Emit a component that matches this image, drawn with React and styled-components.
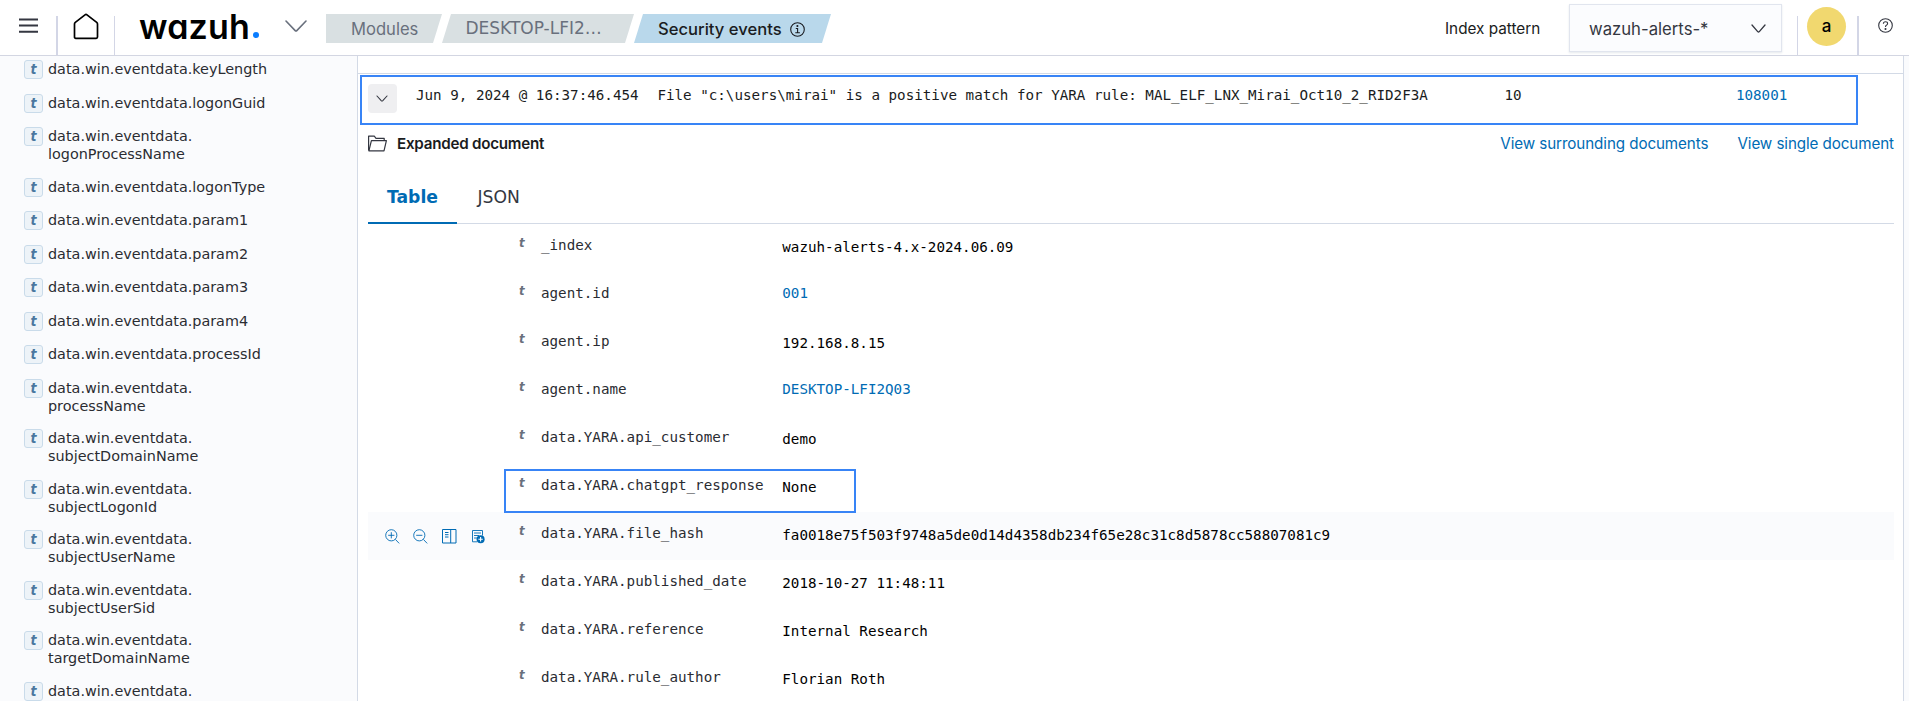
import React from "react";
import styled, { createGlobalStyle, css } from "styled-components";

const GlobalStyle = createGlobalStyle`
  *, *::before, *::after { box-sizing: border-box; }
  html, body { margin: 0; padding: 0; }
  body {
    background: #fafbfd;
    color: #1a1c21;
    font-family: Inter, "Liberation Sans", sans-serif;
    overflow: hidden;
  }
`;

const mono = css`
  font-family: "DejaVu Sans Mono", "Liberation Mono", monospace;
  font-size: 14.22px;
  line-height: 20px;
  white-space: pre;
`;

const Shell = styled.div`
  width: 100%;
  height: 701px;
  display: flex;
  flex-direction: column;
  overflow: hidden;
`;

const Header = styled.header`
  flex: none;
  height: 56px;
  display: flex;
  background: #fff;
  border-bottom: 1px solid #d3d6e2;
`;

const HeaderCell = styled.div`
  flex: none;
  width: ${(p) => p.$w}px;
  padding-top: ${(p) => p.$top || 0}px;
  padding-left: ${(p) => p.$left || 0}px;
  svg { display: block; }
`;

const Separator = styled.div`
  flex: none;
  width: ${(p) => p.$w}px;
  margin-top: 16px;
  background: #d3d6e6;
`;

const Logo = styled.div`
  flex: none;
  width: 146px;
  padding-top: 7px;
  display: flex;
  align-items: flex-start;
  color: #000;
  font-size: 34px;
  line-height: 40px;
  font-weight: 600;
  letter-spacing: 0.15px;
  font-feature-settings: "cv11" 1;
  b {
    width: 6px;
    height: 6px;
    border-radius: 50%;
    background: #0a7dff;
    margin: 25px 0 0 3px;
  }
`;

const Crumbs = styled.nav`
  flex: none;
  display: flex;
  padding-top: 14px;
  height: 43px;
`;

const Crumb = styled.span`
  flex: none;
  display: flex;
  width: ${(p) => p.$w}px;
  margin-right: 1px;
  padding-left: ${(p) => p.$left}px;
  background: ${(p) => (p.$active ? "#b9d8eb" : "#d9e0e2")};
  color: ${(p) => (p.$active ? "#1a1c21" : "#69707d")};
  font-size: ${(p) => p.$size || 16.6}px;
  font-weight: ${(p) => (p.$active ? 500 : 400)};
  font-family: ${(p) => (p.$dejavu ? '"DejaVu Sans"' : "Inter")}, sans-serif;
  line-height: ${(p) => p.$lh || 31}px;
  white-space: nowrap;
  clip-path: ${(p) =>
    p.$first
      ? "polygon(0 0, 100% 0, calc(100% - 9px) 100%, 0 100%)"
      : "polygon(9px 0, 100% 0, calc(100% - 9px) 100%, 0 100%)"};
  & + & { margin-left: -1px; }
  svg { margin: 8px 0 0 8px; }
`;

const Spacer = styled.div`
  flex: 1;
`;

const PatternLabel = styled.div`
  flex: none;
  width: 124px;
  padding-top: 18px;
  font-size: 15.3px;
  line-height: 22px;
`;

const Select = styled.div`
  flex: none;
  width: 213px;
  height: 48px;
  margin-top: 4px;
  padding: 1px 15px 0 19px;
  display: flex;
  align-items: center;
  justify-content: space-between;
  background: #fbfcfe;
  border: 1px solid #e1e5ee;
  box-shadow: 0 1px 2px rgba(152, 162, 179, 0.25);
  color: #343741;
  font-size: 16.7px;
`;

const Avatar = styled.div`
  width: 39px;
  height: 39px;
  border-radius: 50%;
  background: #f1d86f;
  color: #000;
  font-size: 17px;
  font-weight: 500;
  line-height: 38px;
  text-align: center;
`;

const Body = styled.div`
  flex: 1;
  display: flex;
  min-height: 0;
`;

const Sidebar = styled.aside`
  flex: none;
  width: 358px;
  padding: 4px 0 0 24px;
  border-right: 1px solid #d3dae6;
  overflow: hidden;
`;

const Field = styled.div`
  display: flex;
  padding-bottom: 14.5px;
`;

const Token = styled.span`
  flex: none;
  width: 19px;
  height: 19px;
  border: 1px solid #c9dbea;
  border-radius: 3px;
  background: #edf3f8;
  color: #4a779f;
  font: italic bold 14px/16px "DejaVu Sans Condensed", "DejaVu Sans", sans-serif;
  text-align: center;
`;

const FieldName = styled.span`
  padding-left: 5px;
  font-family: "DejaVu Sans", sans-serif;
  font-size: 14.38px;
  line-height: 18px;
  color: #2a2c32;
  white-space: pre;
`;

const Main = styled.main`
  flex: none;
  width: 1546px;
  padding-top: 17px;
  background: #fff;
  border-right: 1px solid #d3dae6;
`;

const EventRow = styled.div`
  border-top: 1px solid #d3dae6;
  padding: 1px 0 0 2px;
`;

const EventOutline = styled.div`
  ${mono}
  width: 1498px;
  height: 50px;
  border: 2px solid #3884f6;
  display: flex;
  padding: 7px 0 0 6px;
`;

const EventCell = styled.span`
  flex: none;
  width: ${(p) => p.$w}px;
  padding-top: 1px;
  color: ${(p) => (p.$link ? "#006bb4" : "#1a1c21")};
`;

const Toggle = styled.button`
  flex: none;
  width: 29px;
  height: 29px;
  margin-right: 19px;
  padding: 0 1px 1px 0;
  border: 0;
  border-radius: 4px;
  background: #efeff1;
  display: flex;
  align-items: center;
  justify-content: center;
`;

const DocHead = styled.div`
  display: flex;
  height: 36px;
  margin-bottom: 2px;
  padding: 0 9px 0 10px;
  align-items: center;
  svg { margin: 1px 10px 0 0; }
  b {
    flex: 1;
    font-size: 15.2px;
    font-weight: 600;
    letter-spacing: -0.25px;
  }
`;

const DocLink = styled.a`
  color: #006bb4;
  font-size: 15.2px;
  letter-spacing: -0.09px;
  margin-left: 29px;
`;

const Tabs = styled.div`
  display: flex;
  height: 61px;
  margin: 0 9px 0 10px;
  box-shadow: inset 0 -1px 0 #d3dae6;
  font-family: "DejaVu Sans", sans-serif;
  font-size: 17.2px;
  line-height: 68px;
`;

const Tab = styled.div`
  padding: 0 19.5px 0 19px;
  height: 61px;
  color: ${(p) => (p.$active ? "#006bb4" : "#343741")};
  font-weight: ${(p) => (p.$active ? 700 : 400)};
  border-bottom: ${(p) => (p.$active ? "2px solid #006bb4" : "0")};
  & + & { padding-left: 20px; }
`;

const Row = styled.div`
  ${mono}
  display: flex;
  height: 48px;
  margin: 0 9px 0 10px;
  background: ${(p) => (p.$hover ? "#fafbfd" : "transparent")};
`;

const Actions = styled.div`
  flex: none;
  width: 136px;
  padding: 16.5px 0 0 16.5px;
  display: flex;
  gap: 13.8px;
`;

const RowBody = styled.div`
  position: relative;
  display: flex;
  width: 352px;
  height: ${(p) => (p.$outlined ? 44 : 48)}px;
  margin-top: ${(p) => (p.$outlined ? 5 : 0)}px;
  padding: ${(p) => (p.$outlined ? "0 0 0 13px" : "0 0 0 15px")};
  border: ${(p) => (p.$outlined ? "2px solid #3884f6" : "0")};
  & > * { margin-top: ${(p) => (p.$outlined ? -7 : 0)}px; }
`;

const TypeMark = styled.span`
  flex: none;
  width: 22px;
  padding-top: 9px;
  font: italic bold 13px/20px "DejaVu Sans Condensed", "DejaVu Sans", sans-serif;
  color: #69707d;
`;

const Label = styled.span`
  flex: none;
  width: 241.3px;
  padding-top: 11px;
  color: #2a2c32;
`;

const Value = styled.span`
  padding-top: ${(p) => (p.$link ? 11 : 13)}px;
  color: ${(p) => (p.$link ? "#006bb4" : "#000")};
`;

const Chevron = ({ w, h, color, sw = 1.4 }) => (
  <svg width={w} height={h} viewBox={`0 0 ${w} ${h}`} fill="none" stroke={color} strokeWidth={sw} strokeLinecap="round" strokeLinejoin="round">
    <path d={`M1 1 L${w / 2 - 0.8} ${h - 1.4} Q${w / 2} ${h - 0.6} ${w / 2 + 0.8} ${h - 1.4} L${w - 1} 1`} />
  </svg>
);

const MenuIcon = () => (
  <svg width="19" height="16" viewBox="0 0 19 16" fill="#343741">
    <path d="M0 0.4h19v2H0zM0 6.6h19v2H0zM0 12.8h19v2H0z" />
  </svg>
);

const HomeIcon = () => (
  <svg width="26" height="27" viewBox="0 0 26 27" fill="none" stroke="#000" strokeWidth="1.7" strokeLinejoin="round">
    <path d="M1.5 11 Q1.5 10 2.3 9.3 L12 1.8 Q13 1 14 1.8 L23.7 9.3 Q24.5 10 24.5 11 V24 Q24.5 25.3 23.2 25.3 H2.8 Q1.5 25.3 1.5 24 Z" />
  </svg>
);

const InfoIcon = () => (
  <svg width="15" height="15" viewBox="0 0 15 15" fill="none" stroke="#1a1c21" strokeWidth="1.1">
    <circle cx="7.5" cy="7.5" r="6.8" />
    <path d="M5.8 6.5h1.8v4.2M5.3 10.8h4.6" />
    <circle cx="7.4" cy="4" r="0.5" fill="#1a1c21" />
  </svg>
);

const HelpIcon = () => (
  <svg width="15" height="15" viewBox="0 0 15 15" fill="none" stroke="#343741" strokeWidth="1.1">
    <circle cx="7.5" cy="7.5" r="6.8" />
    <path d="M5.4 5.8 Q5.4 3.8 7.5 3.8 Q9.6 3.8 9.6 5.6 Q9.6 6.8 8.4 7.3 Q7.5 7.7 7.5 9" />
    <circle cx="7.5" cy="11" r="0.5" fill="#343741" />
  </svg>
);

const FolderIcon = () => (
  <svg width="19" height="17" viewBox="0 0 19 17" fill="none" stroke="#343741" strokeWidth="1.2" strokeLinejoin="round">
    <path d="M0.6 15.5V1.2H6.3L8 3.3H16.2V5.5" />
    <path d="M0.9 15.8 L3.4 5.6 H18.4 L16 15.8 Z" />
  </svg>
);

const blue = "#006bb4";

const ZoomIcon = ({ plus }) => (
  <svg width="15" height="15" viewBox="0 0 15 15" fill="none" stroke={blue} strokeWidth="0.9">
    <circle cx="6.3" cy="6.3" r="5.6" />
    <path d="M10.4 10.4 L14.2 14.4" />
    <path d={plus ? "M3.2 6.3h6.2M6.3 3.2v6.2" : "M3.2 6.3h6.2"} />
  </svg>
);

const ColumnsIcon = () => (
  <svg width="15" height="15" viewBox="0 0 15 15" fill="none" stroke={blue} strokeWidth="1">
    <path d="M0.5 0.5h13.5v13.5H0.5zM8.7 0.5v13.5M3 3.5h3.5M3 5.7h3.5M3 8h3.5" />
  </svg>
);

const FilterIcon = () => (
  <svg width="15" height="15" viewBox="0 0 15 15" fill="none" stroke={blue} strokeWidth="0.9">
    <path d="M6 12.8H1.5V1.5h10v5M3 4h7M3 6.5h5M3 9h3" />
    <circle cx="9.6" cy="10.2" r="4" fill={blue} stroke="none" />
    <path d="M7.4 10.2h4.4M9.6 8v4.4" stroke="#fff" strokeWidth="1.1" />
  </svg>
);

const fields = [
  "keyLength", "logonGuid", "\nlogonProcessName", "logonType", "param1", "param2", "param3", "param4",
  "processId", "\nprocessName", "\nsubjectDomainName", "\nsubjectLogonId", "\nsubjectUserName",
  "\nsubjectUserSid", "\ntargetDomainName", "",
];

const rows = [
  { label: "_index", value: "wazuh-alerts-4.x-2024.06.09" },
  { label: "agent.id", value: "001", link: true },
  { label: "agent.ip", value: "192.168.8.15" },
  { label: "agent.name", value: "DESKTOP-LFI2Q03", link: true },
  { label: "data.YARA.api_customer", value: "demo" },
  { label: "data.YARA.chatgpt_response", value: "None", outlined: true },
  { label: "data.YARA.file_hash", value: "fa0018e75f503f9748a5de0d14d4358db234f65e28c31c8d5878cc58807081c9", hover: true },
  { label: "data.YARA.published_date", value: "2018-10-27 11:48:11" },
  { label: "data.YARA.reference", value: "Internal Research" },
  { label: "data.YARA.rule_author", value: "Florian Roth" },
];

export default function App() {
  return (
    <Shell>
      <GlobalStyle />
      <Header>
        <HeaderCell $w={56} $top={18} $left={19}><MenuIcon /></HeaderCell>
        <Separator $w={2} />
        <HeaderCell $w={56} $top={13} $left={15}><HomeIcon /></HeaderCell>
        <Separator $w={1} />
        <HeaderCell $w={24} />
        <Logo>wazuh<b /></Logo>
        <HeaderCell $w={41} $top={20}><Chevron w={22} h={12} color="#69707d" sw={1.6} /></HeaderCell>
        <Crumbs>
          <Crumb $w={116} $left={25} $first>Modules</Crumb>
          <Crumb $w={192} $left={23.5} $dejavu $lh={28} $size={17}>DESKTOP-LFI2…</Crumb>
          <Crumb $w={197} $left={24} $active>Security events<InfoIcon /></Crumb>
        </Crumbs>
        <Spacer />
        <PatternLabel>Index pattern</PatternLabel>
        <Select>wazuh-alerts-*<Chevron w={15} h={9} color="#343741" sw={1.3} /></Select>
        <HeaderCell $w={15} />
        <Separator $w={1} />
        <HeaderCell $w={59} $top={7} $left={9}><Avatar>a</Avatar></HeaderCell>
        <Separator $w={2} />
        <HeaderCell $w={50} $top={18} $left={19}><HelpIcon /></HeaderCell>
      </Header>
      <Body>
        <Sidebar>
          {fields.map((f) => (
            <Field key={f}>
              <Token>t</Token>
              <FieldName>{"data.win.eventdata." + f}</FieldName>
            </Field>
          ))}
        </Sidebar>
        <Main>
          <EventRow>
            <EventOutline>
              <Toggle aria-label="Collapse"><Chevron w={12} h={7} color="#343741" sw={1.1} /></Toggle>
              <EventCell $w={241.4}>Jun 9, 2024 @ 16:37:46.454</EventCell>
              <EventCell $w={847}>{'File "c:\\users\\mirai" is a positive match for YARA rule: MAL_ELF_LNX_Mirai_Oct10_2_RID2F3A'}</EventCell>
              <EventCell $w={231.5}>10</EventCell>
              <EventCell $w={60} $link>108001</EventCell>
            </EventOutline>
          </EventRow>
          <DocHead>
            <FolderIcon />
            <b>Expanded document</b>
            <DocLink>View surrounding documents</DocLink>
            <DocLink>View single document</DocLink>
          </DocHead>
          <Tabs>
            <Tab $active>Table</Tab>
            <Tab>JSON</Tab>
          </Tabs>
          {rows.map((r) => (
            <Row key={r.label} $hover={r.hover}>
              <Actions>
                {r.hover && (<><ZoomIcon plus /><ZoomIcon /><ColumnsIcon /><FilterIcon /></>)}
              </Actions>
              <RowBody $outlined={r.outlined}>
                <TypeMark>t</TypeMark>
                <Label>{r.label}</Label>
                <Value $link={r.link}>{r.value}</Value>
              </RowBody>
            </Row>
          ))}
        </Main>
      </Body>
    </Shell>
  );
}
